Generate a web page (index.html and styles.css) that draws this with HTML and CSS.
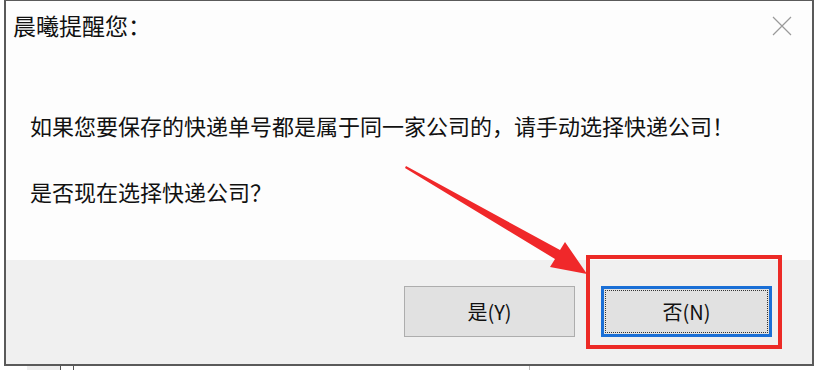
FILE: index.html
```html
<!DOCTYPE html>
<html lang="zh-CN">
<head>
<meta charset="utf-8">
<title>晨曦提醒您</title>
<link rel="stylesheet" href="styles.css">
</head>
<body>
<div class="dialog">
  <div class="titlebar">
    <span class="title">晨曦提醒您：</span>
    <svg class="close" width="20" height="20" viewBox="0 0 20 20" aria-hidden="true">
      <path d="M1 1 L19 19 M19 1 L1 19" stroke="#9a9a9a" stroke-width="1.2" fill="none"/>
    </svg>
  </div>
  <div class="content">
    <p class="msg first">如果您要保存的快递单号都是属于同一家公司的，请手动选择快递公司！</p>
    <p class="msg">是否现在选择快递公司？</p>
  </div>
  <div class="footer">
    <button class="btn">是(Y)</button>
    <button class="btn default">否(N)</button>
  </div>
  <div class="highlight"></div>
  <svg class="arrow" width="818" height="370" viewBox="0 0 818 370" aria-hidden="true">
    <polygon points="406,166 560,250 565,242 587,274 550,267 555,259 405,168" fill="#f0282a"/>
  </svg>
</div>
<div class="behind">
  <span class="piece a"></span>
  <span class="piece b"></span>
  <span class="piece c"></span>
</div>
</body>
</html>
```

FILE: styles.css
```css
html, body {
  margin: 0;
  padding: 0;
  background: #ffffff;
}

body {
  width: 818px;
  height: 370px;
  overflow: hidden;
  font-family: "Noto Sans CJK SC", "Noto Sans", sans-serif;
  color: #111;
}

.dialog {
  position: relative;
  margin-left: 4px;
  width: 810px;
  height: 366px;
  box-sizing: border-box;
  border: 2px solid #5a5a5a;
  border-top-width: 1px;
  background: #fdfdfd;
  display: flex;
  flex-direction: column;
}

.titlebar {
  display: flex;
  align-items: flex-start;
  justify-content: space-between;
  padding: 9px 20px 0 7px;
  height: 31px;
}

.title {
  font-size: 23px;
  line-height: 30px;
  letter-spacing: 0;
}

.close {
  margin-top: 6px;
}

.content {
  flex: 1;
  padding: 69px 0 0 24px;
}

.msg {
  margin: 0;
  font-size: 22px;
  line-height: 30px;
}

.msg.first {
  margin-bottom: 36px;
}

.footer {
  height: 104px;
  box-sizing: border-box;
  background: #f0f0f0;
  display: flex;
  justify-content: flex-end;
  align-items: flex-start;
  gap: 26px;
  padding: 26px 40px 0 0;
}

.btn {
  position: relative;
  width: 171px;
  height: 51px;
  box-sizing: border-box;
  background: #e1e1e1;
  border: 1px solid #adadad;
  border-radius: 0;
  font-family: "Noto Sans CJK SC", "Noto Sans", sans-serif;
  font-size: 20px;
  color: #111;
  padding: 0;
}

.btn.default {
  border: 3px solid #1a6fd6;
}

.btn.default::after {
  content: "";
  position: absolute;
  inset: 1px;
  border: 1px dotted #333;
}

.highlight {
  position: absolute;
  left: 580px;
  top: 254px;
  width: 196px;
  height: 94px;
  box-sizing: border-box;
  border: 4px solid #ec2a26;
}

.arrow {
  position: absolute;
  left: -6px;
  top: -1px;
  pointer-events: none;
}

.behind {
  display: flex;
  height: 4px;
  padding-left: 27px;
}

.piece {
  display: block;
  height: 4px;
}

.piece.a {
  width: 33px;
  background: #eeeeee;
}

.piece.b {
  width: 12px;
  border-left: 1px solid #555;
  border-right: 1px solid #555;
}

.piece.c {
  width: 455px;
  border-right: 1px solid #bbb;
}
```
